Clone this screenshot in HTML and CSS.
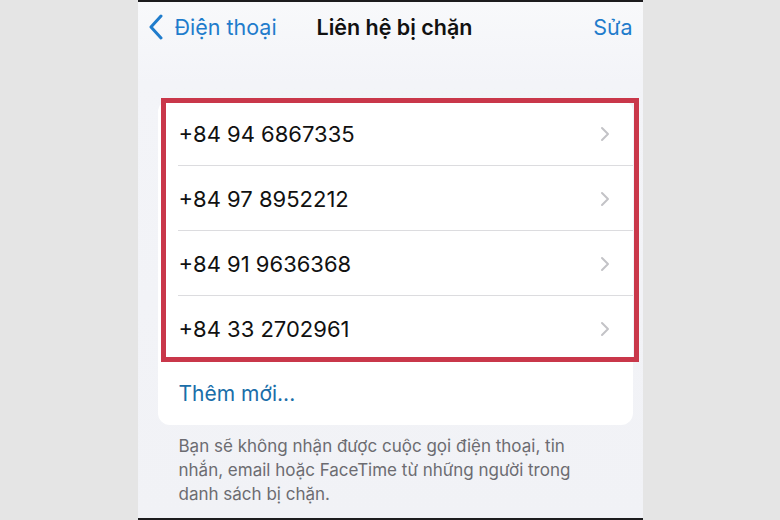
FILE: index.html
```html
<!DOCTYPE html>
<html lang="vi">
<head>
<meta charset="utf-8">
<link rel="stylesheet" href="styles.css">
</head>
<body>
<div class="screen">
  <header class="nav">
    <a class="back">
      <svg class="back-icon" width="16" height="26" viewBox="0 0 16 26"><path d="M13 2 L3 13 L13 24" fill="none" stroke="currentColor" stroke-width="3" stroke-linecap="round" stroke-linejoin="round"/></svg>
      <span>Điện thoại</span>
    </a>
    <h1 class="title">Liên hệ bị chặn</h1>
    <a class="edit">Sửa</a>
  </header>
  <section class="card">
    <div class="highlight"></div>
    <ul class="list">
      <li class="row"><span>+84 94 6867335</span><svg class="chev" width="10" height="16" viewBox="0 0 10 16"><path d="M2 2 L8 8 L2 14" fill="none" stroke="currentColor" stroke-width="2" stroke-linecap="round" stroke-linejoin="round"/></svg></li>
      <li class="row"><span>+84 97 8952212</span><svg class="chev" width="10" height="16" viewBox="0 0 10 16"><path d="M2 2 L8 8 L2 14" fill="none" stroke="currentColor" stroke-width="2" stroke-linecap="round" stroke-linejoin="round"/></svg></li>
      <li class="row"><span>+84 91 9636368</span><svg class="chev" width="10" height="16" viewBox="0 0 10 16"><path d="M2 2 L8 8 L2 14" fill="none" stroke="currentColor" stroke-width="2" stroke-linecap="round" stroke-linejoin="round"/></svg></li>
      <li class="row"><span>+84 33 2702961</span><svg class="chev" width="10" height="16" viewBox="0 0 10 16"><path d="M2 2 L8 8 L2 14" fill="none" stroke="currentColor" stroke-width="2" stroke-linecap="round" stroke-linejoin="round"/></svg></li>
      <li class="row add">Thêm mới...</li>
    </ul>
  </section>
  <p class="note">Bạn sẽ không nhận được cuộc gọi điện thoại, tin nhắn, email hoặc FaceTime từ những người trong danh sách bị chặn.</p>
</div>
</body>
</html>
```

FILE: styles.css
```css
html, body {
  margin: 0;
  padding: 0;
  background: #e5e5e5;
  height: 520px;
  overflow: hidden;
}
body {
  display: flex;
  justify-content: center;
  font-family: Inter, "Noto Sans", "Liberation Sans", sans-serif;
}
.screen {
  width: 505px;
  height: 516px;
  border-top: 2px solid #1c1c1e;
  border-bottom: 2px solid #1c1c1e;
  background: linear-gradient(#f8f9fb 0, #f3f4f8 80px, #f1f2f6 100%);
  display: flex;
  flex-direction: column;
}
.nav {
  display: grid;
  grid-template-columns: 1fr auto 1fr;
  align-items: center;
  height: 50px;
  padding: 0 10px 0 10px;
}
.back {
  display: flex;
  align-items: center;
  gap: 11px;
  color: #1f7ccc;
  font-size: 21.5px;
}
.back-icon {
  display: block;
}
.title {
  margin: 0;
  padding-left: 9px;
  font-size: 21.5px;
  font-weight: 600;
  color: #111;
}
.edit {
  justify-self: end;
  color: #1f7ccc;
  font-size: 21.5px;
}
.card {
  position: relative;
  margin: 48px 10px 0 20px;
  background: #fff;
  border-radius: 12px;
}
.highlight {
  position: absolute;
  left: 3px;
  top: -2px;
  width: 478px;
  height: 264px;
  box-sizing: border-box;
  border: 5px solid #c9374a;
  pointer-events: none;
  z-index: 1;
}
.list {
  list-style: none;
  margin: 0;
  padding: 0;
}
.row {
  box-sizing: border-box;
  height: 65px;
  margin-left: 20px;
  padding: 2px 23px 0 1px;
  display: flex;
  align-items: center;
  justify-content: space-between;
  font-size: 22px;
  color: #111;
  border-bottom: 1px solid #dcdcdf;
}
.row:first-child {
  height: 66px;
}
.row.add {
  border-bottom: none;
  height: 64px;
  padding-top: 0;
  font-size: 21px;
  color: #1a6ea9;
}
.chev {
  color: #c3c3c7;
  display: block;
}
.note {
  width: 400px;
  margin: 9px 0 0 41px;
  font-size: 17px;
  line-height: 24px;
  color: #6c6c71;
}
```
